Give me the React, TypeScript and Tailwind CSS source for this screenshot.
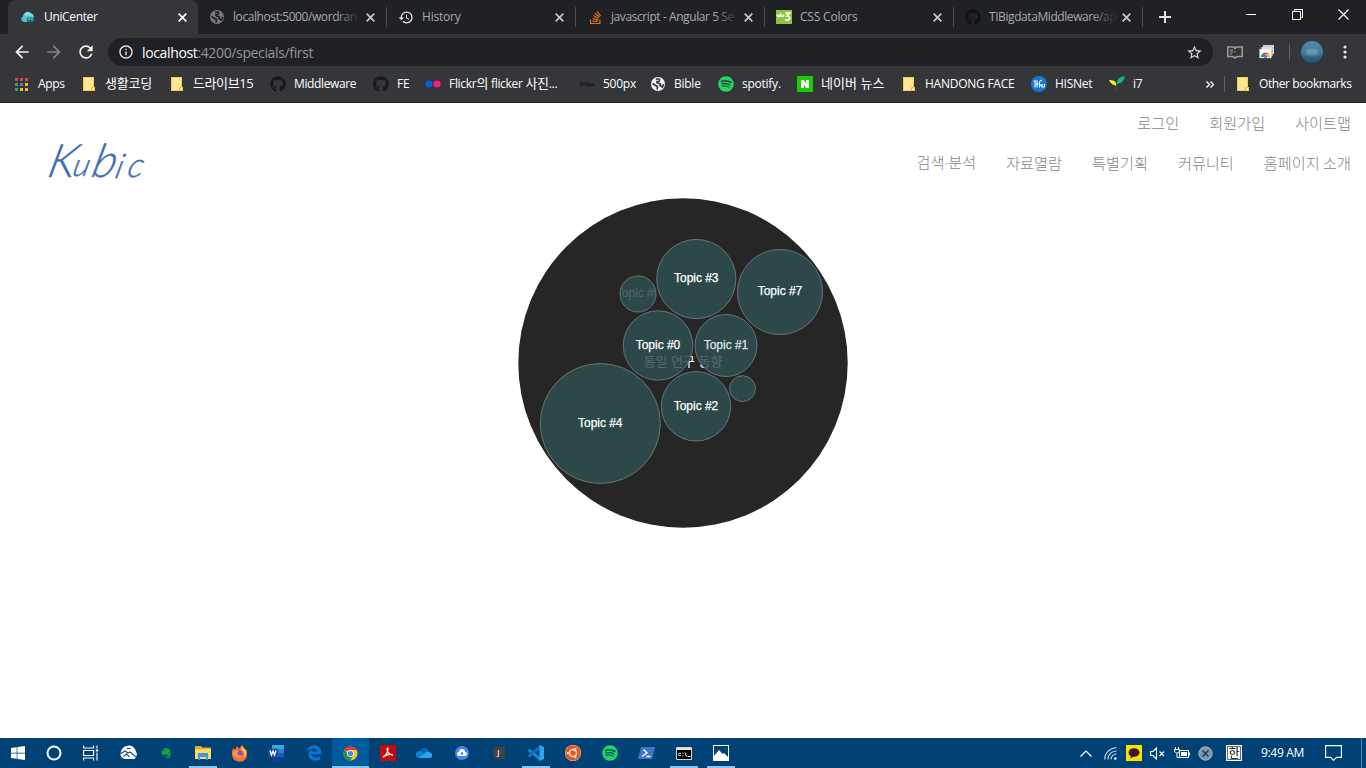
import React from 'react';
import { FaGithub, FaSpotify, FaWindows, FaUbuntu, FaEvernote, FaEdgeLegacy, FaStackOverflow } from 'react-icons/fa';
import { MdHistory, MdStarBorder, MdPublic, MdArrowBack, MdArrowForward, MdRefresh, MdInfoOutline } from 'react-icons/md';

type Kids = { children?: React.ReactNode };

const Close = ({ color }: { color: string }) => (
  <svg className="shrink-0" width="9" height="9" viewBox="0 0 9 9" stroke={color} strokeWidth="1.700"><path d="M.7 .7l7.600 7.600M8.300 .7L.7 8.300" /></svg>
);

const Folder = () => (
  <svg width="14" height="16" viewBox="0 0 14 16">
    <path d="M1 1h11v10h1v4H1z" fill="#ffe594" />
    <path d="M1.5 1.5h10v10h1v3h-11z" fill="none" stroke="#f1cd57" />
    <path d="M9.5 14.5v-3h2" fill="none" stroke="#e3b93c" />
  </svg>
);

const Globe = ({ disc, land }: { disc: string; land: string }) => (
  <svg width="14" height="14" viewBox="0 0 14 14">
    <circle cx="7" cy="7" r="7" fill={disc} />
    <path d="M5 2.300q4-1 3.500 1T6 4.500q-.5 2 2 2t1 2l2.500 1.500 1.200-3M1.500 6.500l3 2 2 1-.5 3" fill="none" stroke={land} strokeWidth="1.600" />
  </svg>
);

const ChromeLogo = ({ size = 16 }: { size?: number }) => (
  <svg width={size} height={size} viewBox="0 0 16 16">
    <circle cx="8" cy="8" r="7.5" fill="#fbc116" />
    <path d="M8 8L1.5 4.25A7.5 7.5 0 0 1 14.5 4.25H8z" fill="#e33b2e" />
    <path d="M8 8H4.7L1.5 4.25A7.5 7.5 0 0 0 7.8 15.5L11 9.6z" fill="#229342" />
    <circle cx="8" cy="8" r="3.7" fill="#fff" />
    <circle cx="8" cy="8" r="2.8" fill="#4285f4" />
  </svg>
);

const CloudIcon = () => (
  <svg width="16" height="16" viewBox="0 0 16 16">
    <path d="M3.500 13a3 3 0 0 1-.8-5.500A4.500 4.500 0 0 1 10 4.500l4 3v5.500z" fill="#4cc3cf" />
    <path d="M4 6.500a3.800 3.800 0 0 1 6.500-2.500q3 .5 3 3.500z" fill="#7fdbe2" />
    <path d="M7 8.500h7v4.500H7z" fill="#1b6f86" />
    <path d="M8 9.500h2v1H8zM11 9.500h2v1h-2z" fill="#8fe3ec" />
  </svg>
);

const tabs = [
  { title: 'localhost:5000/wordran', icon: <Globe disc="#77797d" land="#202124" />, fade: true },
  { title: 'History', icon: <MdHistory className="size-[17px] text-[#e8eaed]" />, fade: false },
  { title: 'javascript - Angular 5 Se', icon: <FaStackOverflow className="size-[15px] text-[#e8701f]" />, fade: true },
  {
    title: 'CSS Colors',
    icon: (
      <svg width="16" height="14" viewBox="0 0 16 14">
        <rect width="16" height="14" fill="#8bc63f" />
        <path d="M1 4.500q1.500 4 3.500 0q1.500 4 3.500 0M9 3h4.500l-2.500 3q3 0 2.500 2.800q-1 2.500-4.500 .8" fill="none" stroke="#fff" strokeWidth="1.700" />
      </svg>
    ),
    fade: false,
  },
  { title: 'TIBigdataMiddleware/ap', icon: <FaGithub className="size-4 text-[#121314]" />, fade: true },
];

const TabStrip = () => (
  <div className="flex h-[34px] bg-[#202124] pl-2">
    <div className="flex w-[190px] items-center rounded-t-lg bg-[#35363a] pl-3 pr-[11px]">
      <CloudIcon />
      <span className="ml-2 flex-1 text-[12px] tracking-[-0.35px] text-white">UniCenter</span>
      <Close color="#fff" />
    </div>
    {tabs.map((t) => (
      <div key={t.title} className="flex w-[189px] items-center">
        <div className="flex w-[188px] items-center pl-[11px] pr-[11px]">
          <span className="flex w-4 shrink-0 justify-center">{t.icon}</span>
          <span className={`relative ml-2 flex-1 whitespace-nowrap text-[12px] text-[#a6a9ae] ${t.fade ? 'tracking-[-0.42px]' : 'tracking-[-0.2px]'}`}>
            {t.title}
            {t.fade && <span className="absolute inset-y-0 right-0 w-6 bg-gradient-to-r from-transparent to-[#202124]" />}
          </span>
          <span className="ml-[6px] flex"><Close color="#c6c8cc" /></span>
        </div>
        <div className="h-5 w-px bg-[#4a4c50]" />
      </div>
    ))}
    <div className="flex w-[44px] items-center justify-center">
      <svg width="12" height="12" viewBox="0 0 12 12" stroke="#dfe1e5" strokeWidth="2"><path d="M0 6h12M6 0v12" /></svg>
    </div>
    <div className="ml-auto flex h-[29px] w-[138px] items-center">
      <div className="flex w-[46px] justify-center"><div className="h-px w-[10px] bg-white" /></div>
      <div className="flex w-[46px] justify-center">
        <svg width="11" height="11" viewBox="0 0 11 11" fill="none" stroke="#fff"><path d="M.5 2.500h8v8h-8zM2.500 2.500v-2h8v8h-2" /></svg>
      </div>
      <div className="flex w-[46px] justify-center">
        <svg width="11" height="11" viewBox="0 0 11 11" stroke="#fff" strokeWidth="1.100"><path d="M.5 .5l10 10M10.500 .5l-10 10" /></svg>
      </div>
    </div>
  </div>
);

const Toolbar = () => (
  <div className="flex h-9 items-center bg-[#35363a] pl-3">
    <div className="flex w-8"><MdArrowBack className="size-5 text-[#f1f3f4]" /></div>
    <div className="flex w-8"><MdArrowForward className="size-5 text-[#85868a]" /></div>
    <div className="flex w-8"><MdRefresh className="size-5 text-[#f1f3f4]" /></div>
    <div className="flex h-7 w-[1105px] items-center rounded-full bg-[#202124] pl-[10px] pr-[10px]">
      <MdInfoOutline className="size-4 text-[#e8eaed]" />
      <span className="ml-2 flex-1 text-[14px] tracking-[-0.36px] text-[#92959a]"><span className="text-white">localhost</span>:4200/specials/first</span>
      <MdStarBorder className="size-[17px] text-[#dadce0]" />
    </div>
    <div className="flex w-[44px] justify-center">
      <svg width="16" height="13" viewBox="0 0 16 13" fill="none" stroke="#98999c" strokeWidth="1.600">
        <path d="M.8 1h5.700L8 2l1.500-1h5.700v9.500H10L8 12l-2-1.500H.8z" /><path d="M3 4h3M3 6h3M3 8h2" strokeWidth="1" /><path d="M8 2v1.500M8 5v1.500" strokeWidth="1" />
      </svg>
    </div>
    <div className="flex w-[19px] justify-center">
      <svg width="16" height="14" viewBox="0 0 16 14">
        <path d="M4 0h11v9H4z" fill="#d6d7d8" /><path d="M2.500 2h11v9h-11z" fill="#f5f5f5" stroke="#999" strokeWidth=".5" />
        <path d="M.5 4h12v9H.5z" fill="#fff" stroke="#999" strokeWidth=".5" />
        <path d="M2 12a4.500 4.500 0 0 1 9 0z" fill="#de5246" /><path d="M2 12a4 4 0 0 1 2-3.500l2 3.500z" fill="#1aa260" /><path d="M11 12a4 4 0 0 0-1-3H6l1 3z" fill="#fbc116" />
        <circle cx="6.500" cy="11.500" r="1.800" fill="#4285f4" />
      </svg>
    </div>
    <div className="ml-[13px] h-4 w-px bg-[#5f6165]" />
    <div className="ml-[11px] flex size-[22px] items-center justify-center overflow-hidden rounded-full bg-gradient-to-b from-[#5488a6] via-[#437998] to-[#1f506f]">
      <div className="h-[6px] w-3 rounded-full bg-[#b5cbd4]/40 blur-[1px]" />
    </div>
    <div className="flex flex-1 justify-center">
      <svg width="4" height="14" viewBox="0 0 4 14" fill="#e8eaed"><circle cx="2" cy="2" r="1.600" /><circle cx="2" cy="7" r="1.600" /><circle cx="2" cy="12" r="1.600" /></svg>
    </div>
  </div>
);

const Bookmark = ({ icon, width, children }: Kids & { icon: React.ReactNode; width: string }) => (
  <div className={`flex shrink-0 items-center whitespace-nowrap ${width}`}>
    <span className="flex w-4 shrink-0 justify-center">{icon}</span>
    <span className="ml-2">{children}</span>
  </div>
);

const appColors = ['#ea4335', '#ea4335', '#ea4335', '#34a853', '#4285f4', '#fbbc05', '#34a853', '#fbbc05', '#fbbc05'];

const Bookmarks = () => (
  <div className="flex h-[33px] items-center border-b border-[#232427] bg-[#35363a] pb-[4px] pl-[14px] text-[12px] tracking-[-0.25px] text-white">
    <Bookmark width="w-[67px]" icon={
      <svg className="mr-[2px]" width="13" height="13" viewBox="0 0 13 13">{appColors.map((c, i) => <rect key={i} x={(i % 3) * 5} y={Math.floor(i / 3) * 5} width="3" height="3" fill={c} />)}</svg>
    }><span className="tracking-[-0.35px]">Apps</span></Bookmark>
    <Bookmark width="w-[88px]" icon={<Folder />}><span className="text-[13px]">생활코딩</span></Bookmark>
    <Bookmark width="w-[101px]" icon={<Folder />}><span className="text-[13px] tracking-[-0.4px]">드라이브15</span></Bookmark>
    <Bookmark width="w-[103px]" icon={<FaGithub className="size-4 text-[#18191b]" />}><span className="tracking-[-0.37px]">Middleware</span></Bookmark>
    <Bookmark width="w-[52px]" icon={<FaGithub className="size-4 text-[#18191b]" />}>FE</Bookmark>
    <Bookmark width="w-[154px]" icon={<svg width="16" height="8" viewBox="0 0 16 8"><circle cx="4" cy="4" r="3.600" fill="#0063dc" /><circle cx="12" cy="4" r="3.600" fill="#ff1981" /></svg>}>
      <span className="tracking-[-0.3px]">Flickr<span className="text-[13px]">의</span> flicker <span className="text-[13px]">사진</span>...</span>
    </Bookmark>
    <Bookmark width="w-[71px]" icon={<span className="text-[6px] font-bold tracking-[-0.4px] text-[#17181a]">500px</span>}>500px</Bookmark>
    <Bookmark width="w-[68px]" icon={<Globe disc="#f1f3f4" land="#35363a" />}>Bible</Bookmark>
    <Bookmark width="w-[79px]" icon={<FaSpotify className="size-4 text-[#1ed760]" />}>spotify.</Bookmark>
    <Bookmark width="w-[104px]" icon={<svg width="16" height="16" viewBox="0 0 16 16"><path d="M0 0h16v16H0z" fill="#19ce00" /><path d="M4 4h2.800l2.400 3.700V4H12v8H9.200L6.800 8.300V12H4z" fill="#fff" /></svg>}>
      <span className="text-[13px] tracking-[0.05px]">네이버 뉴스</span>
    </Bookmark>
    <Bookmark width="w-[130px]" icon={<Folder />}>HANDONG FACE</Bookmark>
    <Bookmark width="w-[78px]" icon={
      <svg width="16" height="16" viewBox="0 0 16 16"><circle cx="8" cy="8" r="8" fill="#1878cf" /><path d="M2.500 5h3M4 5v6.500M6 4.500v7M4 8h5M11 4q-3 0-2.500 3.500t4 1M8.500 6.500v5M10.500 8v3h3V8" fill="none" stroke="#fff" /></svg>
    }>HISNet</Bookmark>
    <Bookmark width="w-[60px]" icon={
      <svg width="16" height="16" viewBox="0 0 16 16"><path d="M0 4q7-1 8 6Q2 9 0 4z" fill="#f4ef1b" /><path d="M8 8Q7 1 16 0q-1 7-8 8z" fill="#0cba86" /><path d="M7.500 8v7" stroke="#35632c" /></svg>
    }>i7</Bookmark>
    <svg className="ml-[37px]" width="8" height="7" viewBox="0 0 8 7" fill="none" stroke="#fff" strokeWidth="1.400"><path d="M.5 .5l3 3-3 3M4.500 .5l3 3-3 3" /></svg>
    <div className="ml-[10px] h-4 w-px bg-[#5f6165]" />
    <div className="ml-[10px] flex items-center whitespace-nowrap">
      <span className="flex w-4 justify-center"><Folder /></span>
      <span className="ml-2 tracking-[-0.4px]">Other bookmarks</span>
    </div>
  </div>
);

const circles = [
  { x: 178.300, y: 81, r: 39.600, label: 'Topic #3', base: 84, ink: '#fff' },
  { x: 262, y: 94, r: 42.500, label: 'Topic #7', base: 97, ink: '#fff' },
  { x: 120, y: 96, r: 18, label: 'Topic #5', base: 99, ink: '#4a6464' },
  { x: 140, y: 147.500, r: 34.700, label: 'Topic #0', base: 151, ink: '#fff' },
  { x: 208, y: 147.500, r: 31, label: 'Topic #1', base: 151, ink: '#dfe5e5' },
  { x: 82.300, y: 225.500, r: 60, label: 'Topic #4', base: 229, ink: '#fff' },
  { x: 178, y: 208.300, r: 34.700, label: 'Topic #2', base: 212, ink: '#fff' },
  { x: 224.500, y: 190.600, r: 12.900, label: '', base: 0, ink: '#fff' },
];

const TopicChart = () => (
  <svg width="330" height="330" viewBox="0 0 330 330" className="font-['Liberation_Sans','Noto_Sans_CJK_KR',sans-serif]">
    <circle cx="165" cy="165" r="164.700" fill="#262626" />
    <text x="165" y="168" textAnchor="middle" fontSize="13" fill="#fff">통일 연구 동향</text>
    {circles.map((c, i) => (
      <g key={i}>
        <clipPath id={`clip${i}`}><circle cx={c.x} cy={c.y} r={c.r} /></clipPath>
        <circle cx={c.x} cy={c.y} r={c.r} fill="#2f4f4f" fillOpacity=".85" stroke="#697575" strokeWidth="1" />
        {c.label && <text x={c.x} y={c.base} textAnchor="middle" fontSize="12" textLength="44.500" fill={c.ink} stroke={c.ink} strokeWidth=".25" clipPath={`url(#clip${i})`}>{c.label}</text>}
      </g>
    ))}
  </svg>
);

const Page = () => (
  <main className="flex flex-1 flex-col bg-white">
    <header className="flex h-[95px] justify-between pr-[15px] font-['Noto_Sans_CJK_KR',sans-serif] text-[15.2px] font-light text-[#858585]">
      <svg className="ml-10 mt-[32px]" width="115" height="54" viewBox="0 0 115 54" fill="#3f6eb5" stroke="#3f6eb5" strokeWidth=".4" fontFamily="Lato, sans-serif" fontStyle="italic">
        <g transform="translate(0 42) skewX(-14)">
          <text fontWeight="300">
            <tspan x="6" y="0" fontSize="46">K</tspan><tspan x="31" y="-1" fontSize="32">u</tspan><tspan x="50" y="0" fontSize="46">b</tspan><tspan x="74" y="1" fontSize="34">i</tspan><tspan x="86" y="0" fontSize="34">c</tspan>
          </text>
        </g>
      </svg>
      <div className="flex flex-col items-end">
        <nav className="flex h-[38px] items-center gap-[30px]"><a>로그인</a><a>회원가입</a><a>사이트맵</a></nav>
        <nav className="flex h-[42px] items-center gap-[30px]"><a>검색<span className="font-['Open_Sans']">·</span>분석</a><a>자료열람</a><a>특별기획</a><a>커뮤니티</a><a>홈페이지 소개</a></nav>
      </div>
    </header>
    <div className="flex justify-center"><TopicChart /></div>
  </main>
);

const Task = ({ open, active, children }: Kids & { open?: boolean; active?: boolean }) => (
  <div className={`flex h-[30px] w-[37px] flex-col items-center ${active ? 'bg-[#005a9e]' : ''}`}>
    <div className="flex h-7 items-center justify-center pt-[2px]">{children}</div>
    {open && <div className={`h-[2px] bg-[#8ec5f0] ${active ? 'w-full' : 'w-7'}`} />}
  </div>
);

const Taskbar = () => (
  <footer className="flex h-[30px] bg-[#004275] text-white">
    <div className="flex w-9 items-center justify-center"><FaWindows className="size-4" /></div>
    <Task><svg className="mr-[1px]" width="16" height="16" viewBox="0 0 16 16"><circle cx="8" cy="8" r="6.500" fill="none" stroke="#fff" strokeWidth="2" /></svg></Task>
    <Task>
      <svg className="mr-[2px]" width="16" height="16" viewBox="0 0 16 16" fill="none" stroke="#fff" strokeWidth="1.100"><path d="M.6 .5v2.500h10V.5M.6 15.500V13h10v2.500M.6 5.500h10v5H.6zM14 .5v3M14 7.500v8" /><path d="M12.800 4.500h2.400v2h-2.400z" fill="#fff" stroke="none" /></svg>
    </Task>
    <Task>
      <svg width="17" height="16" viewBox="0 0 17 16"><path d="M1 6.500A7.800 7.800 0 0 1 15 4l2 5a8 8 0 0 1-2.500 5H4A7 7 0 0 1 0 9z" fill="#fff" /><path d="M0 9l5-3 3 2 2-1 6 5M3.500 11.500l3-2.500 3 3" fill="none" stroke="#174e78" strokeWidth="1.100" /><path d="M6.500 3.500h4" stroke="#174e78" /></svg>
    </Task>
    <Task><FaEvernote className="size-3 text-[#14a33b]" /></Task>
    <Task open>
      <svg width="16" height="14" viewBox="0 0 16 14"><path d="M0 0h6l1.500 1.500H16V13H0z" fill="#e7a52b" /><path d="M0 3h16v10H0z" fill="#ffd76b" /><path d="M3 7h10v7h-2v-3H5v3H3z" fill="#3b97df" /></svg>
    </Task>
    <Task>
      <svg width="17" height="17" viewBox="0 0 17 17"><path d="M1 7l1-4 2 2 2-4 2 3 3-4q1 3 3 4 3 5 1.500 8.500A7.700 7.700 0 0 1 1 10z" fill="#ff7139" /><path d="M11 .5q-1 4 1.500 6 2 3-1 6 5-2 4-7-2-1-4.500-5z" fill="#ffc72c" /><circle cx="8" cy="9" r="3.800" fill="#8052df" /><path d="M4 5l4 1-2 2q1 4 6 2-2 5-7 2T4 5z" fill="#ff9e35" /></svg>
    </Task>
    <Task>
      <svg width="17" height="16" viewBox="0 0 17 16"><path d="M4 0h12v4H4z" fill="#41a5ee" /><path d="M4 4h12v4H4z" fill="#2b7cd3" /><path d="M4 8h12v4H4z" fill="#185abd" /><path d="M4 12h12v4H4z" fill="#103f91" /><path d="M0 3.500h10v9H0z" fill="#174f9f" /><path d="M2 5.500L3.500 10 5 6l1.500 4L8 5.500" fill="none" stroke="#fff" strokeWidth="1.300" /></svg>
    </Task>
    <Task><FaEdgeLegacy className="size-4 text-[#0078d7]" /></Task>
    <Task open active><ChromeLogo size={15} /></Task>
    <Task>
      <svg width="16" height="16" viewBox="0 0 16 16"><path d="M0 0h16v16H0z" fill="#c40c0a" /><path d="M3 12q5-3 5-9-2 0 0 4 2 3 5 3-5-2-10 2z" fill="none" stroke="#fff" strokeWidth="1.200" /></svg>
    </Task>
    <Task>
      <svg width="17" height="12" viewBox="0 0 17 12"><path d="M4 10a4 4 0 0 1 0-6.500A5 5 0 0 1 13 4l-2 5z" fill="#0865b5" /><path d="M3.500 11a3.500 3.500 0 1 1 1.500-6.500l9 6z" fill="#137dd2" /><path d="M3 11L10 5a3.500 3.500 0 0 1 4 .5 2.800 2.800 0 0 1 0 5.500z" fill="#28a8ea" /></svg>
    </Task>
    <Task>
      <svg width="14" height="14" viewBox="0 0 14 14"><circle cx="7" cy="7" r="7" fill="#4486f4" /><path d="M4 10a2 2 0 0 1 0-4 3 3 0 0 1 6 0 2 2 0 0 1 0 4z" fill="#fff" /><circle cx="7" cy="7.500" r="1.300" fill="#4486f4" /></svg>
    </Task>
    <Task><span className="flex size-3 items-center justify-center rounded-[1px] bg-[#414141] text-[7px] font-bold text-[#ddd]">J</span></Task>
    <Task open>
      <svg width="16" height="16" viewBox="0 0 16 16"><path d="M0 5l1.500-1.200L12 12v4L0 6z" fill="#1689cf" /><path d="M0 11l1.500 1.200L12 4V0L0 10z" fill="#0c72b8" /><path d="M11.500 0L16 2v12l-4.500 2z" fill="#2aa9ef" /></svg>
    </Task>
    <Task>
      <span className="flex size-4 rounded-full bg-white"><FaUbuntu className="size-4 text-[#e95420]" /></span>
    </Task>
    <Task><FaSpotify className="size-4 text-[#1ed760]" /></Task>
    <Task>
      <svg width="17" height="12" viewBox="0 0 17 12"><path d="M3 0h14l-3 12H0z" fill="#3f73c8" /><path d="M5.500 2.500l3.500 3.500-5 3.500M8.500 9.500h4" fill="none" stroke="#fff" strokeWidth="1.400" /></svg>
    </Task>
    <Task open>
      <svg width="16" height="13" viewBox="0 0 16 13"><path d="M.5 .5h15v12H.5z" fill="#000" stroke="#d6d6d6" /><path d="M1 1h14v2H1z" fill="#e5e5e5" /><path d="M5 6.500q-2.500-1-2.500 1t2.500 1M6.500 6h1M6.500 9h1M9 5.500l1.500 4M11.500 9.500h3" fill="none" stroke="#fff" /></svg>
    </Task>
    <Task open>
      <svg width="16" height="16" viewBox="0 0 16 16"><path d="M0 0h16v16H0z" fill="#fff" /><path d="M1 1h14v11l-4-4-1.500 1L6 5l-5 6z" fill="#004275" /></svg>
    </Task>

    <div className="ml-auto flex w-[292px] items-center text-[12px]">
      <div className="flex w-6 justify-center"><svg width="12" height="7" viewBox="0 0 12 7" fill="none" stroke="#fff" strokeWidth="1.200"><path d="M.5 6.500L6 1l5.500 5.500" /></svg></div>
      <div className="flex w-[25px] justify-center">
        <svg width="13" height="13" viewBox="0 0 13 13" fill="none" stroke="#d4e0e9" strokeWidth="1.100"><path d="M.7 12.500A12 12 0 0 1 12.500 .7M3.800 12.500a8.700 8.700 0 0 1 8.700-8.500M7 12.500A5.500 5.500 0 0 1 12.500 7" /><circle cx="11.300" cy="11.500" r="1.300" fill="#fff" stroke="none" /></svg>
      </div>
      <div className="flex w-[23px] justify-center">
        <svg className="mr-[1px]" width="16" height="16" viewBox="0 0 16 16"><path d="M0 0h16v16H0z" fill="#fbe300" /><ellipse cx="8" cy="7.500" rx="5.500" ry="4.300" fill="#391b1b" /><path d="M5 10l-.5 3.500L8 11z" fill="#391b1b" /></svg>
      </div>
      <div className="flex w-[23px] justify-center">
        <svg width="15" height="13" viewBox="0 0 15 13" fill="none" stroke="#fff" strokeWidth="1.100"><path d="M.6 4.500H3L6.500 1v11L3 8.500H.6zM9.500 4.500l4.500 4.500M14 4.500L9.500 9" /></svg>
      </div>
      <div className="flex w-[25px] justify-center">
        <svg width="16" height="13" viewBox="0 0 16 13" fill="none" stroke="#fff"><path d="M5.500 3.500h9v7h-9zM15.500 5.500v3M1.500 0v3M4.500 0v3M.5 2.500h5v2l-2 1.500h-1L.5 4.500zM3 6v4.500h2" /><path d="M7 5h6v4H7z" fill="#fff" stroke="none" /></svg>
      </div>
      <div className="flex w-[23px] justify-center">
        <svg width="15" height="15" viewBox="0 0 15 15"><circle cx="7.500" cy="7.500" r="6.700" fill="#7b98ad" stroke="#9bb3c5" /><path d="M4.500 4.500l6 6M10.500 4.500l-6 6" stroke="#173f5d" strokeWidth="1.600" /></svg>
      </div>
      <div className="flex w-[34px] justify-center">
        <svg width="16" height="16" viewBox="0 0 16 16"><path d="M0 0h16v16H0z" fill="#fff" /><path d="M1.500 1.500h13v13h-13z" fill="none" stroke="#000" strokeWidth=".6" /><text x="8" y="12.500" textAnchor="middle" fontSize="12" fill="#000">한</text></svg>
      </div>
      <div className="flex w-[63px] justify-center whitespace-nowrap tracking-[-0.3px]">9:49 AM</div>
      <div className="flex w-[38px] justify-center">
        <svg width="17" height="16" viewBox="0 0 17 16" fill="none" stroke="#fff" strokeWidth="1.100"><path d="M.6 .6h15.800v11.800h-5L8.500 15.300 5.600 12.400h-5z" /></svg>
      </div>
      <div className="ml-[9px] h-[30px] w-px bg-[#5684a6]" />
    </div>
  </footer>
);

export default function App() {
  return (
    <div className="flex h-[768px] w-[1366px] flex-col overflow-hidden font-['Open_Sans','Noto_Sans_CJK_KR',sans-serif]">
      <TabStrip />
      <Toolbar />
      <Bookmarks />
      <Page />
      <Taskbar />
    </div>
  );
}
